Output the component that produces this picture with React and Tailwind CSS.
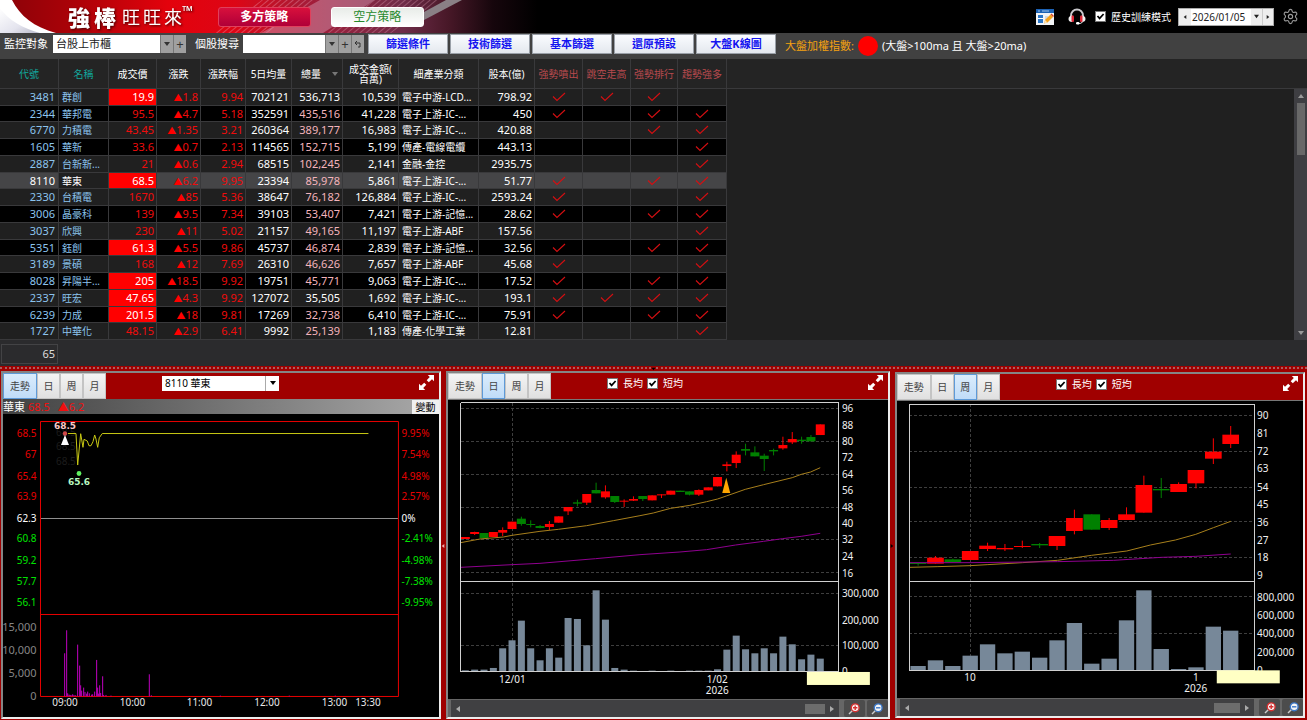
import React, { useState } from 'react';
import clsx from 'clsx';
import { Settings } from 'lucide-react';

const COLUMNS = [
  { label: '代號', width: 'w-[59px]', tone: 'text-[#12a79d]' },
  { label: '名稱', width: 'w-[50px]', tone: 'text-[#12a79d]' },
  { label: '成交價', width: 'w-[48px]' },
  { label: '漲跌', width: 'w-[44px]' },
  { label: '漲跌幅', width: 'w-[45px]' },
  { label: '5日均量', width: 'w-[46px]' },
  { label: '總量', width: 'w-[51px]', sorted: true },
  { label: '成交金額(\n百萬)', width: 'w-[56px]' },
  { label: '細產業分類', width: 'w-[80px]' },
  { label: '股本(億)', width: 'w-[56px]' },
  { label: '強勢噴出', width: 'w-[48px]', tone: 'text-[#b84a4e]' },
  { label: '跳空走高', width: 'w-[48px]', tone: 'text-[#b84a4e]' },
  { label: '強勢排行', width: 'w-[47px]', tone: 'text-[#b84a4e]' },
  { label: '趨勢強多', width: 'w-[49px]', tone: 'text-[#b84a4e]' },
];

// code, name, price, limit up, change, change %, 5d avg, volume, amount, sector, capital, flags
const STOCKS = [
  ['3481', '群創', '19.9', 1, '1.8', '9.94', '702121', '536,713', '10,539', '電子中游-LCD...', '798.92', '1110'],
  ['2344', '華邦電', '95.5', 0, '4.7', '5.18', '352591', '435,516', '41,228', '電子上游-IC-...', '450', '1011'],
  ['6770', '力積電', '43.45', 0, '1.35', '3.21', '260364', '389,177', '16,983', '電子上游-IC-...', '420.88', '0011'],
  ['1605', '華新', '33.6', 0, '0.7', '2.13', '114565', '152,715', '5,199', '傳產-電線電纜', '443.13', '0001'],
  ['2887', '台新新...', '21', 0, '0.6', '2.94', '68515', '102,245', '2,141', '金融-金控', '2935.75', '0001'],
  ['8110', '華東', '68.5', 1, '6.2', '9.95', '23394', '85,978', '5,861', '電子上游-IC-...', '51.77', '1011'],
  ['2330', '台積電', '1670', 0, '85', '5.36', '38647', '76,182', '126,884', '電子上游-IC-...', '2593.24', '1001'],
  ['3006', '晶豪科', '139', 0, '9.5', '7.34', '39103', '53,407', '7,421', '電子上游-記憶...', '28.62', '1011'],
  ['3037', '欣興', '230', 0, '11', '5.02', '21157', '49,165', '11,197', '電子上游-ABF', '157.56', '0001'],
  ['5351', '鈺創', '61.3', 1, '5.5', '9.86', '45737', '46,874', '2,839', '電子上游-記憶...', '32.56', '1011'],
  ['3189', '景碩', '168', 0, '12', '7.69', '26310', '46,626', '7,657', '電子上游-ABF', '45.68', '1001'],
  ['8028', '昇陽半...', '205', 1, '18.5', '9.92', '19751', '45,771', '9,063', '電子上游-IC-...', '17.52', '1011'],
  ['2337', '旺宏', '47.65', 1, '4.3', '9.92', '127072', '35,505', '1,692', '電子上游-IC-...', '193.1', '1111'],
  ['6239', '力成', '201.5', 1, '18', '9.81', '17269', '32,738', '6,410', '電子上游-IC-...', '75.91', '1011'],
  ['1727', '中華化', '48.15', 0, '2.9', '6.41', '9992', '25,139', '1,183', '傳產-化學工業', '12.81', '0001'],
];

const WHITE_VOLUME = ['3481', '2337'];

// Chart data is kept in thirds of a pixel from the chart origin.
// candle: [color, body top, body bottom, wick top, wick bottom]
const DAILY = {
  ox: 440,
  viewBox: '448 400 440 299',
  frame: [62, 113, 1197, 650, 920],
  first: 76,
  step: 28.03,
  body: 27,
  bar: 21,
  gridX: 217,
  gridY: [130, 229, 328, 426, 523, 623, 685, 841],
  candles: [
    ['r', 516, 522, 516, 522], ['r', 501, 507, 500, 510], ['g', 504, 520, 504, 520], ['r', 501, 516, 501, 516],
    ['r', 495, 503, 487, 513], ['r', 470, 492, 470, 492], ['g', 461, 477, 455, 482], ['g', 477, 480, 466, 487],
    ['g', 483, 489, 480, 490], ['r', 477, 486, 468, 495], ['r', 454, 473, 454, 473], ['r', 426, 439, 426, 450],
    ['g', 412, 416, 404, 424], ['r', 387, 413, 387, 420], ['g', 375, 385, 353, 385], ['r', 379, 397, 361, 401],
    ['g', 393, 411, 393, 414], ['r', 407, 410, 403, 426], ['r', 402, 407, 394, 408], ['g', 393, 402, 393, 408],
    ['r', 391, 406, 391, 406], ['r', 388, 391, 388, 399], ['r', 377, 389, 377, 389], ['g', 377, 381, 377, 381],
    ['g', 379, 389, 379, 391], ['r', 375, 389, 373, 393], ['r', 367, 376, 367, 376], ['r', 336, 364, 336, 364],
    ['r', 298, 303, 290, 319], ['r', 269, 294, 259, 309], ['g', 252, 257, 236, 271], ['g', 262, 274, 244, 274],
    ['g', 272, 282, 266, 318], ['g', 255, 259, 251, 271], ['r', 240, 250, 215, 254], ['r', 222, 232, 201, 237],
    ['g', 224, 228, 215, 236], ['g', 216, 229, 210, 229], ['r', 178, 210, 178, 210],
  ],
  volumes: [
    4, 6, 6, 11, 70, 94, 153, 70, 34, 70, 42, 161, 158, 79, 244, 156, 11, 6, 3, 1, 3, 1, 3, 1, 3, 3, 3, 7, 66, 108, 67,
    55, 70, 55, 105, 82, 37, 51, 39,
  ],
  short: '62,533 120,522 190,516 216,511 300,499 355,493 440,482 520,467 600,452 640,444 692,430 750,421 800,410 833,402 859,393 916,373 971,359 1057,338 1084,328 1112,321 1141,308',
  long: '62,607 216,599 300,595 467,581 600,569 720,561 800,554 887,540 971,529 1028,521 1084,514 1141,505',
  labels: [
    ['96', 129], ['88', 179], ['80', 229], ['72', 277], ['64', 328], ['56', 375], ['48', 425], ['40', 475],
    ['32', 523], ['24', 573], ['16', 623], ['300,000', 685], ['200,000', 764], ['100,000', 841], ['0', 918],
  ],
  dates: [{ x: 217, y: 941, lines: ['12/01'] }, { x: 832, y: 941, lines: ['1/02', '2026'] }],
  marker: '859,338 847,384 871,384',
  note: [1101, 921],
};

const WEEKLY = {
  ox: 887,
  viewBox: '897 401 406 297',
  frame: [67, 118, 1101, 650, 915],
  first: 93,
  step: 52.1,
  body: 50,
  bar: 46,
  gridX: 249,
  gridY: [151, 258, 366, 470, 577, 695, 805],
  candles: [
    ['g', 594, 597, 594, 602], ['r', 578, 596, 573, 596], ['g', 583, 592, 581, 592], ['r', 558, 585, 558, 585],
    ['r', 542, 552, 533, 558], ['r', 549, 553, 537, 558], ['r', 543, 546, 527, 549], ['g', 537, 541, 534, 549],
    ['r', 513, 543, 513, 555], ['r', 459, 498, 434, 508], ['g', 448, 494, 448, 494], ['r', 465, 489, 459, 495],
    ['r', 448, 465, 427, 465], ['r', 360, 443, 332, 443], ['g', 372, 376, 339, 399], ['r', 357, 381, 352, 381],
    ['r', 315, 355, 315, 370], ['r', 260, 281, 220, 297], ['r', 209, 237, 183, 249],
  ],
  volumes: [12, 29, 12, 43, 77, 50, 55, 37, 89, 141, 19, 34, 149, 239, 63, 3, 8, 130, 118],
  short: '67,607 150,605 249,602 300,599 406,593 511,586 613,571 719,558 790,540 865,525 926,508 979,488 1031,469',
  long: '67,593 249,593 511,590 680,586 823,577 926,574 1031,567',
  labels: [
    ['90', 150], ['81', 203], ['72', 258], ['63', 310], ['54', 365], ['45', 417], ['36', 470], ['27', 524],
    ['18', 577], ['9', 630], ['800,000', 695], ['600,000', 750], ['400,000', 805], ['200,000', 860], ['0', 914],
  ],
  dates: [{ x: 249, y: 937, lines: ['10'] }, { x: 926, y: 937, lines: ['1', '2026'] }],
  note: [989, 916],
};

const PRICE_AXIS = [
  ['68.5', '9.95%', 433, '#e80000'], ['67', '7.54%', 454, '#e80000'], ['65.4', '4.98%', 476, '#e80000'],
  ['63.9', '2.57%', 496, '#e80000'], ['62.3', '0%', 518, '#ffffff'], ['60.8', '-2.41%', 538, '#00e400'],
  ['59.2', '-4.98%', 560, '#00e400'], ['57.7', '-7.38%', 581, '#00e400'], ['56.1', '-9.95%', 602, '#00e400'],
];

const TICK_VOLUME = [
  [194, 129], [200, 198], [203, 9], [207, 5], [210, 4], [213, 4], [218, 6], [222, 4], [227, 3], [233, 155],
  [239, 92], [242, 33], [245, 17], [251, 26], [255, 13], [260, 8], [263, 14], [268, 9], [275, 5], [278, 6],
  [284, 14], [290, 109], [293, 26], [296, 8], [299, 33], [302, 10], [308, 60], [311, 4], [318, 4], [333, 2],
  [448, 66], [454, 3], [661, 2], [868, 2], [1006, 2],
];

const Check = () => (
  <svg viewBox="0 0 14 10" className="mx-auto block h-[10px] w-[14px]" aria-hidden="true">
    <path d="M1 4.5 L5 8.5 L13 1" fill="none" stroke="#d40f12" strokeWidth="1.1" />
  </svg>
);

const Caret = ({ className, dir = 'down' }) => {
  const d = { down: 'M0 1h6L3 5z', up: 'M0 5h6L3 1z', left: 'M5 0v6L1 3z', right: 'M1 0v6l4-3z' }[dir];
  return (
    <svg viewBox="0 0 6 6" className={clsx('shrink-0', className || 'h-[6px] w-[6px]')} aria-hidden="true">
      <path d={d} fill="currentColor" />
    </svg>
  );
};

const Tick = ({ id, label, className }) => (
  <span className="flex items-center gap-[5px]">
    <span className="grid">
      <input
        id={id}
        type="checkbox"
        defaultChecked
        className="peer col-start-1 row-start-1 h-[11px] w-[11px] appearance-none border border-[#777] bg-white"
      />
      <svg viewBox="0 0 11 11" className="pointer-events-none col-start-1 row-start-1 hidden h-[11px] w-[11px] peer-checked:block">
        <path d="M2.5 5 L4.6 7.4 L8.6 3" fill="none" stroke="#000" strokeWidth="1.7" />
      </svg>
    </span>
    <label htmlFor={id} className={className}>{label}</label>
  </span>
);

const Banner = () => (
  <svg viewBox="0 0 560 33" preserveAspectRatio="none" className="h-[33px] w-[560px]" aria-hidden="true">
    <defs>
      <linearGradient id="red" x1="0" x2="1">
        <stop offset="0" stopColor="#8a0208" />
        <stop offset=".15" stopColor="#b00208" />
        <stop offset=".3" stopColor="#e3020c" />
        <stop offset=".42" stopColor="#dd0616" />
        <stop offset=".55" stopColor="#a51c38" />
        <stop offset=".72" stopColor="#6e2c48" />
        <stop offset=".8" stopColor="#481828" />
        <stop offset=".88" stopColor="#16060c" />
        <stop offset=".96" stopColor="#000" />
      </linearGradient>
      <linearGradient id="pearl" x1="0" x2="1" y1="0" y2="1">
        <stop offset="0" stopColor="#ffffff" />
        <stop offset=".6" stopColor="#e4e4ee" />
        <stop offset="1" stopColor="#b8b8c8" />
      </linearGradient>
      <pattern id="hatch" width="4" height="4" patternUnits="userSpaceOnUse" patternTransform="rotate(50)">
        <path d="M0 0v4" stroke="#f0b0c4" strokeWidth="1.4" />
      </pattern>
    </defs>
    <rect width="560" height="33" fill="url(#red)" />
    <path d="M0 0h12C20 16 34 27 56 33H0z" fill="#fff" />
    <path d="M0 8C8 20 24 29 40 33H0z" fill="url(#pearl)" />
    <path d="M262 0h55l-50 33h-55z" fill="url(#hatch)" opacity=".5" />
    <path d="M320 0h55l-52 33h-62z" fill="#d8a0b8" opacity=".45" />
    <path d="M375 0h66l-50 33h-66z" fill="url(#hatch)" opacity=".45" />
    <path d="M446 0h16L424 20v-8z" fill="#8a8086" />
  </svg>
);

const Header = () => (
  <header className="grid h-[33px] shrink-0 bg-black">
    <div className="col-start-1 row-start-1"><Banner /></div>
    <div className="col-start-1 row-start-1 flex items-center pr-2 text-white">
      <h1 className="ml-[68px] flex items-center drop-shadow-[1px_1px_1px_#400]">
        <span className="flex gap-1 text-[22px] leading-8 font-black"><span>強</span><span>棒</span></span>
        <span className="ml-1.5 flex gap-[3px] text-[18px] leading-8"><span>旺</span><span>旺</span><span>來</span></span>
        <span className="self-start text-[14px] leading-5">™</span>
      </h1>
      <button className="ml-[25px] h-[20px] w-[93px] rounded-[3px] border border-[#e0405c] bg-linear-to-b from-[#d8103c] to-[#b00038] text-[12px] leading-[18px] font-bold">
        多方策略
      </button>
      <button className="ml-5 h-[20px] w-[93px] rounded-[3px] border border-white bg-linear-to-b from-[#e8ece8] to-white text-[12px] leading-[18px] text-[#27892c]">
        空方策略
      </button>
      <div className="ml-auto flex items-center">
        <button aria-label="編輯版面">
          <svg viewBox="0 0 18 16" className="h-4 w-[18px]">
            <rect width="18" height="16" fill="#f2f4f6" />
            <rect width="18" height="4" fill="#1c62b4" />
            <path d="M2 2h2M6 2h7" stroke="#9cc4ee" />
            <rect x="2" y="6" width="5" height="8" fill="#2a76c8" />
            <path d="M2 9.500h5" stroke="#fff" />
            <path d="M9 8h3M9 10h2" stroke="#b8c0c8" />
            <path d="M8 14.500l1-3.500 5.500-5.500 2.500 2.500L11.500 13.500z" fill="#f7a41c" />
            <path d="M14.500 5.500l1-1 2.500 2.500-1 1z" fill="#d8472c" />
            <path d="M8 14.500l1-3.500 2.500 2.500z" fill="#fbe3b4" />
          </svg>
        </button>
        <button aria-label="客服" className="ml-[14px]">
          <svg viewBox="0 0 18 17" className="h-[17px] w-[18px]">
            <path d="M3 9V7.500a6 6 0 0 1 12 0V9" fill="none" stroke="#c8c8cc" strokeWidth="1.800" />
            <path d="M4.500 7.500C2 7.500.5 9 .5 11s1.500 3.200 4 3z" fill="#f0f0f0" />
            <path d="M13.500 7.500c2.500 0 4 1.500 4 3.500s-1.500 3.200-4 3z" fill="#f0f0f0" />
            <rect x="3.500" y="7.500" width="2.500" height="6.500" rx="1" fill="#e02838" />
            <rect x="12" y="7.500" width="2.500" height="6.500" rx="1" fill="#e02838" />
            <path d="M14.500 14c-1 1.200-2.500 1.700-4.500 1.700" fill="none" stroke="#d8d8d8" strokeWidth="1.100" />
            <rect x="8" y="14" width="3.500" height="2.500" rx="1.200" fill="#fff" />
          </svg>
        </button>
        <span className="ml-[9px]"><Tick id="history" label="歷史訓練模式" className="text-[10px] leading-4" /></span>
        <div className="ml-[7px] flex h-[18px] w-[96px] items-center border border-[#aaa] bg-white text-[#222]">
          <button aria-label="前一日" className="flex h-4 w-3 items-center justify-center bg-[#eee]"><Caret dir="left" className="h-[4px] w-[4px]" /></button>
          <input aria-label="日期" defaultValue="2026/01/05" className="w-0 min-w-0 grow bg-white pl-px text-[10px] leading-4" />
          <button aria-label="選擇日期" className="flex h-4 w-[11px] items-center justify-center bg-[#eee]"><Caret className="h-[5px] w-[5px]" /></button>
          <button aria-label="後一日" className="flex h-4 w-[11px] items-center justify-center border-l border-[#ccc] bg-[#eee]"><Caret dir="right" className="h-[4px] w-[4px]" /></button>
        </div>
        <button aria-label="設定" className="ml-2 text-[#9a9a9a]"><Settings size={17} strokeWidth={1.6} /></button>
      </div>
    </div>
  </header>
);

const SquareButton = ({ label, children }) => (
  <button
    aria-label={label}
    className="flex h-[18px] w-[13px] items-center justify-center border-l border-[#777] bg-[#a0a0a0] text-[13px] leading-none text-[#333]"
  >
    {children}
  </button>
);

const FILTERS = ['篩選條件', '技術篩選', '基本篩選', '還原預設', '大盤K線圖'];

const Toolbar = () => (
  <div className="flex h-[26px] shrink-0 items-center bg-[#414141] pb-1 pl-1 text-[11px] text-white">
    <label htmlFor="watch">監控對象</label>
    <select id="watch" className="ml-[5px] h-[18px] w-[107px] appearance-none bg-white pl-[3px] text-[#222]">
      <option>台股上市櫃</option>
    </select>
    <SquareButton label="展開"><Caret /></SquareButton>
    <SquareButton label="新增">+</SquareButton>
    <label htmlFor="search" className="ml-[9px]">個股搜尋</label>
    <input id="search" className="ml-1 h-[18px] w-[82px] bg-white px-1 text-black" />
    <SquareButton label="搜尋選單"><Caret /></SquareButton>
    <SquareButton label="加入">+</SquareButton>
    <SquareButton label="復原">
      <svg viewBox="0 0 8 8" className="h-2 w-2"><path d="M1 3h5v4H4M3 1L1 3l2 2" fill="none" stroke="#333" /></svg>
    </SquareButton>
    <div className="ml-1 flex gap-[2px]">
      {FILTERS.map((f) => (
        <button key={f} className="h-[20px] w-[80px] border border-[#9aa0a8] bg-linear-to-b from-[#fafcff] to-[#e4e8ee] leading-[18px] font-bold text-[#1414f0]">
          {f}
        </button>
      ))}
    </div>
    <span className="ml-[9px] pt-1 text-[#f5a210]">大盤加權指數:</span>
    <span className="mt-1 ml-1 h-5 w-5 rounded-full bg-[#ff0000]" />
    <span className="ml-1 pt-1 text-[11px]">(大盤&gt;100ma 且 大盤&gt;20ma)</span>
  </div>
);

const cell = 'overflow-hidden border-r border-b border-[#39393b] py-0 whitespace-nowrap';

const StockRow = ({ stock, index, selected, onSelect }) => {
  const [code, name, price, limit, change, pct, avg, vol, amount, sector, capital, flags] = stock;
  return (
    <tr
      onClick={onSelect}
      className={clsx(
        index % 4 === 1 ? 'h-4' : 'h-[17px]',
        selected ? 'bg-[#454547]' : index % 2 ? 'bg-black' : 'bg-[#202020]',
      )}
    >
      <td className={clsx(cell, 'pr-[3px] text-right', selected ? 'text-white' : 'text-[#8cc4ee]')}>{code}</td>
      <td className={clsx(cell, 'pl-[3px] text-[10px]', selected ? 'bg-[#202020] text-white' : 'text-[#8cc4ee]')}>{name}</td>
      <td className={clsx(cell, 'pr-[2px] text-right', limit ? 'bg-[#ff0000] text-white' : 'text-[#f00c0c]')}>{price}</td>
      <td className={clsx(cell, 'pr-[2px] text-right text-[#f00c0c]')}><span className="text-[9px] leading-none text-[#ff0000]">▲</span>{change}</td>
      <td className={clsx(cell, 'pr-[2px] text-right text-[#f00c0c]')}>{pct}</td>
      <td className={clsx(cell, 'pr-[2px] text-right')}>{avg}</td>
      <td className={clsx(cell, 'pr-[2px] text-right', !WHITE_VOLUME.includes(code) && 'text-[#f4b4bc]')}>{vol}</td>
      <td className={clsx(cell, 'pr-[2px] text-right')}>{amount}</td>
      <td className={clsx(cell, 'pl-[3px] text-[10px]')}>{sector}</td>
      <td className={clsx(cell, 'pr-[2px] text-right')}>{capital}</td>
      {flags.split('').map((f, i) => (
        <td key={i} className={cell}>{f === '1' && <Check />}</td>
      ))}
    </tr>
  );
};

const StockTable = () => {
  const [selected, setSelected] = useState('8110');
  return (
    <section className="flex shrink-0 bg-[#202020] text-white">
      <table className="w-[727px] shrink-0 table-fixed border-separate border-spacing-0 text-[11px] leading-[14px]">
        <thead>
          <tr className="h-[30px] bg-[#242424]">
            {COLUMNS.map((c) => (
              <th key={c.label} className={clsx('border-r border-b border-[#39393b] p-0 text-[10px] leading-[10px] font-normal whitespace-pre', c.width, c.tone)}>
                {c.sorted ? (
                  <span className="flex items-center justify-between pr-1 pl-[9px]">
                    {c.label}
                    <Caret className="h-[6px] w-[6px] text-[#777]" />
                  </span>
                ) : c.label}
              </th>
            ))}
          </tr>
        </thead>
        <tbody>
          {STOCKS.map((s, i) => (
            <StockRow key={s[0]} stock={s} index={i} selected={s[0] === selected} onSelect={() => setSelected(s[0])} />
          ))}
        </tbody>
      </table>
      <div className="flex grow flex-col">
        <div className="h-[30px] border-b border-[#39393b] bg-[#242424]" />
        <div className="ml-auto flex w-[13px] grow flex-col items-center bg-[#3e3e42] py-1 text-[#999]">
          <Caret dir="up" />
          <div className="mt-1 h-[52px] w-2 bg-[#686868]" />
          <Caret className="mt-auto h-[6px] w-[6px]" />
        </div>
      </div>
    </section>
  );
};

const TABS = ['走勢', '日', '周', '月'];

const PanelHeader = ({ initial, children }) => {
  const [tab, setTab] = useState(initial);
  return (
    <div className="flex h-[26px] shrink-0 bg-[#a00000]">
      <div className="flex">
        {TABS.map((t, i) => (
          <button
            key={t}
            onClick={() => setTab(t)}
            className={clsx(
              'border text-[10px] text-[#444]',
              i === 0 ? 'w-[34px]' : 'w-[23px]',
              t === tab ? 'border-[#5e9ad8] bg-linear-to-b from-[#daecfc] to-[#c0dcf8]' : 'border-[#c4c4c4] bg-linear-to-b from-[#f4f4f4] to-[#e0e0e0]',
            )}
          >
            {t}
          </button>
        ))}
      </div>
      <div className="ml-14 flex items-center gap-[4px] pb-1.5 text-[10px] text-white">{children}</div>
      <button aria-label="放大" className="mr-[5px] ml-auto self-start pt-[2px]">
        <svg viewBox="0 0 15 15" className="h-[15px] w-[15px]">
          <path d="M8.800 0H15v6.200l-2-2L9.800 7.300 7.700 5.200 10.800 2zM6.200 15H0V8.800l2 2 3.200-3.100 2.100 2.100L4.200 13z" fill="#fff" />
        </svg>
      </button>
    </div>
  );
};

const chartText = 'font-["Noto_Sans","Noto_Sans_CJK_TC",sans-serif] text-[10px]';

const CandleChart = ({ data }) => {
  const X = (v) => data.ox + v / 3;
  const Y = (v) => 365 + v / 3;
  const line = (pts) => pts.split(' ').map((p) => p.split(',')).map(([a, b]) => `${X(+a)},${Y(+b)}`).join(' ');
  const [l, t, r, m, b] = data.frame;
  return (
    <svg viewBox={data.viewBox} className={clsx('min-h-0 w-full flex-1 bg-black', chartText)}>
      <g stroke="#3e3e3e" strokeDasharray="3 2" shapeRendering="crispEdges">
        {data.gridY.map((g) => <path key={g} d={`M${X(l)} ${Y(g)}H${X(r)}`} />)}
        <path d={`M${X(data.gridX)} ${Y(t)}V${Y(b)}`} />
      </g>
      <g fill="#778899">
        {data.volumes.map((v, i) => {
          const c = data.first + data.step * i;
          const x0 = Math.max(c - data.bar / 2, l);
          return <rect key={i} x={X(x0)} y={Y(b - v)} width={(c + data.bar / 2 - x0) / 3} height={v / 3} />;
        })}
      </g>
      {data.candles.map(([color, top, bottom, high, low], i) => {
        const c = data.first + data.step * i;
        const x0 = Math.max(c - data.body / 2, l);
        return (
          <g key={i} fill={color === 'r' ? '#ff0000' : '#008000'}>
            <rect x={X(x0)} y={Y(top)} width={(c + data.body / 2 - x0) / 3} height={(bottom - top) / 3} />
            <rect x={X(c) - 0.5} y={Y(high)} width="1" height={(low - high) / 3} />
          </g>
        );
      })}
      <polyline points={line(data.short)} fill="none" stroke="#a8801c" />
      <polyline points={line(data.long)} fill="none" stroke="#900090" />
      {data.marker && <polygon points={line(data.marker)} fill="#ffa500" />}
      <path
        d={`M${X(l)} ${Y(t)}H${X(r)}V${Y(b)}H${X(l)}ZM${X(l)} ${Y(m)}H${X(r)}`}
        fill="none"
        stroke="#d0d0d0"
        shapeRendering="crispEdges"
      />
      <g fill="#f0f0f0">
        {data.labels.map(([text, y]) => <text key={text} x={X(r) + 3} y={Y(y) + 4}>{text}</text>)}
        {data.dates.map((d) => (
          <text key={d.x} textAnchor="middle">
            {d.lines.map((text, i) => <tspan key={text} x={X(d.x)} y={Y(d.y) + 4 + i * 11}>{text}</tspan>)}
          </text>
        ))}
      </g>
      <rect x={X(data.note[0])} y={Y(data.note[1])} width="63" height="13" fill="#ffffc4" />
    </svg>
  );
};

const Magnifier = ({ color, plus }) => (
  <svg viewBox="0 0 12 12" className="h-3 w-3">
    <path d="M1 11l3.500-3.500" stroke="#ccc" strokeWidth="1.500" />
    <circle cx="7.200" cy="4.800" r="3.900" fill="#f4f4f4" stroke={color} strokeWidth="1.400" />
    <path d={plus ? 'M5 4.800h4.400M7.200 2.600v4.400' : 'M5 4.800h4.400'} stroke={color} strokeWidth="1.400" />
  </svg>
);

const ChartScroller = ({ thumb }) => (
  <div className="flex h-[18px] shrink-0 gap-[2px] bg-[#666] pt-px pl-[3px]">
    <div className="mr-[3px] flex grow items-center bg-[#404042] px-1 text-[#aaa]">
      <Caret dir="left" />
      <div className={clsx('mr-1 ml-auto h-[10px] bg-[#6c6c6c]', thumb)} />
      <Caret dir="right" />
    </div>
    <button aria-label="放大圖表" className="flex w-[21px] items-center justify-center rounded-xs bg-[#4c4c4c]"><Magnifier color="#d83030" plus /></button>
    <button aria-label="縮小圖表" className="flex w-[21px] items-center justify-center rounded-xs bg-[#4c4c4c]"><Magnifier color="#3c78c8" /></button>
  </div>
);

const TrendChart = () => (
  <svg viewBox="3 414 436 303" className={clsx('min-h-0 w-full flex-1 bg-black', chartText)}>
    <text fill="#1c1c1c">
      <tspan x="56" y="436">68.5</tspan>
      <tspan x="56" y="450">68.5</tspan>
      <tspan x="56" y="465">68.5</tspan>
    </text>
    <path d="M40 518.500H398" stroke="#909090" />
    <path d="M40.500 421.500H398.500V696.500H40.500ZM40.500 614.500H398.500" fill="none" stroke="#e80000" />
    <g fill="#c000c0">
      {TICK_VOLUME.map(([x, h]) => <rect key={x} x={x / 3 - 0.5} y={696.3 - h / 3} width="1" height={h / 3} />)}
    </g>
    <polyline
      points="68,433.500 76,433.500 77.700,465 80.700,433.700 83,447.300 84,439.300 87.300,441 89,445.700 91,445.700 93,441.700 94.700,435 96,439 97.700,447.300 99.300,437.700 102.300,433.500 368.500,433.500"
      fill="none"
      stroke="#c8c814"
    />
    <circle cx="65" cy="433.500" r="2.200" fill="#d04848" />
    <polygon points="65,435 61,445 69,445" fill="#fff" />
    <circle cx="79" cy="473.500" r="2.400" fill="#60f060" />
    <g className="font-['DejaVu_Sans',sans-serif] text-[9px] font-bold" textAnchor="middle">
      <text x="65" y="429" fill="#f8c8c8">68.5</text>
      <text x="79" y="485" fill="#b8f8c0">65.6</text>
    </g>
    {PRICE_AXIS.map(([price, pct, y, fill]) => (
      <g key={price} fill={fill}>
        <text x="36.500" y={y + 4} textAnchor="end">{price}</text>
        <text x="401.500" y={y + 4}>{pct}</text>
      </g>
    ))}
    <g fill="#868686" textAnchor="end" className="text-[11px]">
      <text x="36.500" y="631">15,000</text>
      <text x="36.500" y="654">10,000</text>
      <text x="36.500" y="677">5,000</text>
      <text x="36.500" y="700">0</text>
    </g>
    <g fill="#e8e8e8" textAnchor="middle">
      {[['09:00', 65], ['10:00', 132.5], ['11:00', 199.5], ['12:00', 267], ['13:00', 334.5], ['13:30', 368]].map(([t, x]) => (
        <text key={t} x={x} y="706">{t}</text>
      ))}
    </g>
  </svg>
);

const panel = 'flex min-w-0 flex-col border-2 border-t-[#858585] border-r-[#ececec] border-b-[#ececec] border-l-[#858585] bg-black';

const Splitter = ({ dir, className }) => (
  <div className={clsx('flex w-[5px] items-center justify-center bg-[#a00000]', className)}>
    <Caret dir={dir} className="h-[4px] w-[4px]" />
  </div>
);

export default function App() {
  return (
    <div lang="zh-Hant" className={'flex h-screen min-h-[640px] flex-col overflow-hidden bg-[#a00000] font-["Noto_Sans","Noto_Sans_CJK_TC",sans-serif]'}>
      <Header />
      <Toolbar />
      <StockTable />
      <div className="shrink-0 bg-[#2b2b2d] px-px pt-1 pb-[2px]">
        <div className="h-[20px] w-[57px] border border-[#434345] pr-[2px] text-right text-[11px] leading-[18px] text-[#ddd]">65</div>
      </div>
      <div className="flex h-[5px] shrink-0 items-start bg-[#a00000] pt-px">
        <div className="h-[2px] grow border-t-2 border-dotted border-[#a86060]" />
        <Caret className="h-[4px] w-[5px] text-black" />
        <div className="h-[2px] grow border-t-2 border-dotted border-[#a86060]" />
      </div>
      <main className="flex min-h-0 flex-1">
        <section className={clsx(panel, 'mb-px ml-px flex-[440]')}>
          <PanelHeader initial="走勢">
            <div className="grid w-[117px] items-center">
              <select aria-label="個股" className="col-start-1 row-start-1 h-[15px] appearance-none bg-white pl-[3px] text-[10px] leading-[15px] text-black">
                <option>8110 華東</option>
              </select>
              <span className="pointer-events-none col-start-1 row-start-1 flex h-[15px] w-[14px] items-center justify-center justify-self-end border-l border-[#aaa] text-black">
                <Caret />
              </span>
            </div>
          </PanelHeader>
          <div className="flex h-[15px] shrink-0 items-center bg-linear-to-r from-[#424242] to-[#aaa] text-[11px] leading-[15px]">
            <span className="text-white">華東</span>
            <span className="ml-[3px] text-[#f01010]">68.5</span>
            <span className="ml-2 text-[#f01010]">▲6.2</span>
            <button className="ml-auto h-[14px] w-[27px] bg-[#f0f0f0] text-[10px] leading-[14px] text-black">變動</button>
          </div>
          <TrendChart />
        </section>
        <Splitter dir="left" className="text-[#f0b0b0]" />
        <section className={clsx(panel, 'mb-px flex-[444]')}>
          <PanelHeader initial="日">
            <Tick id="day-long" label="長均" />
            <Tick id="day-short" label="短均" />
          </PanelHeader>
          <div className="h-px shrink-0 bg-[#777]" />
          <CandleChart data={DAILY} />
          <ChartScroller thumb="w-5" />
        </section>
        <Splitter dir="right" className="text-black" />
        <section className={clsx(panel, 'mt-px mr-[2px] mb-[2px] flex-[410]')}>
          <PanelHeader initial="周">
            <Tick id="week-long" label="長均" />
            <Tick id="week-short" label="短均" />
          </PanelHeader>
          <div className="h-px shrink-0 bg-[#777]" />
          <CandleChart data={WEEKLY} />
          <ChartScroller thumb="w-[26px]" />
        </section>
      </main>
    </div>
  );
}
